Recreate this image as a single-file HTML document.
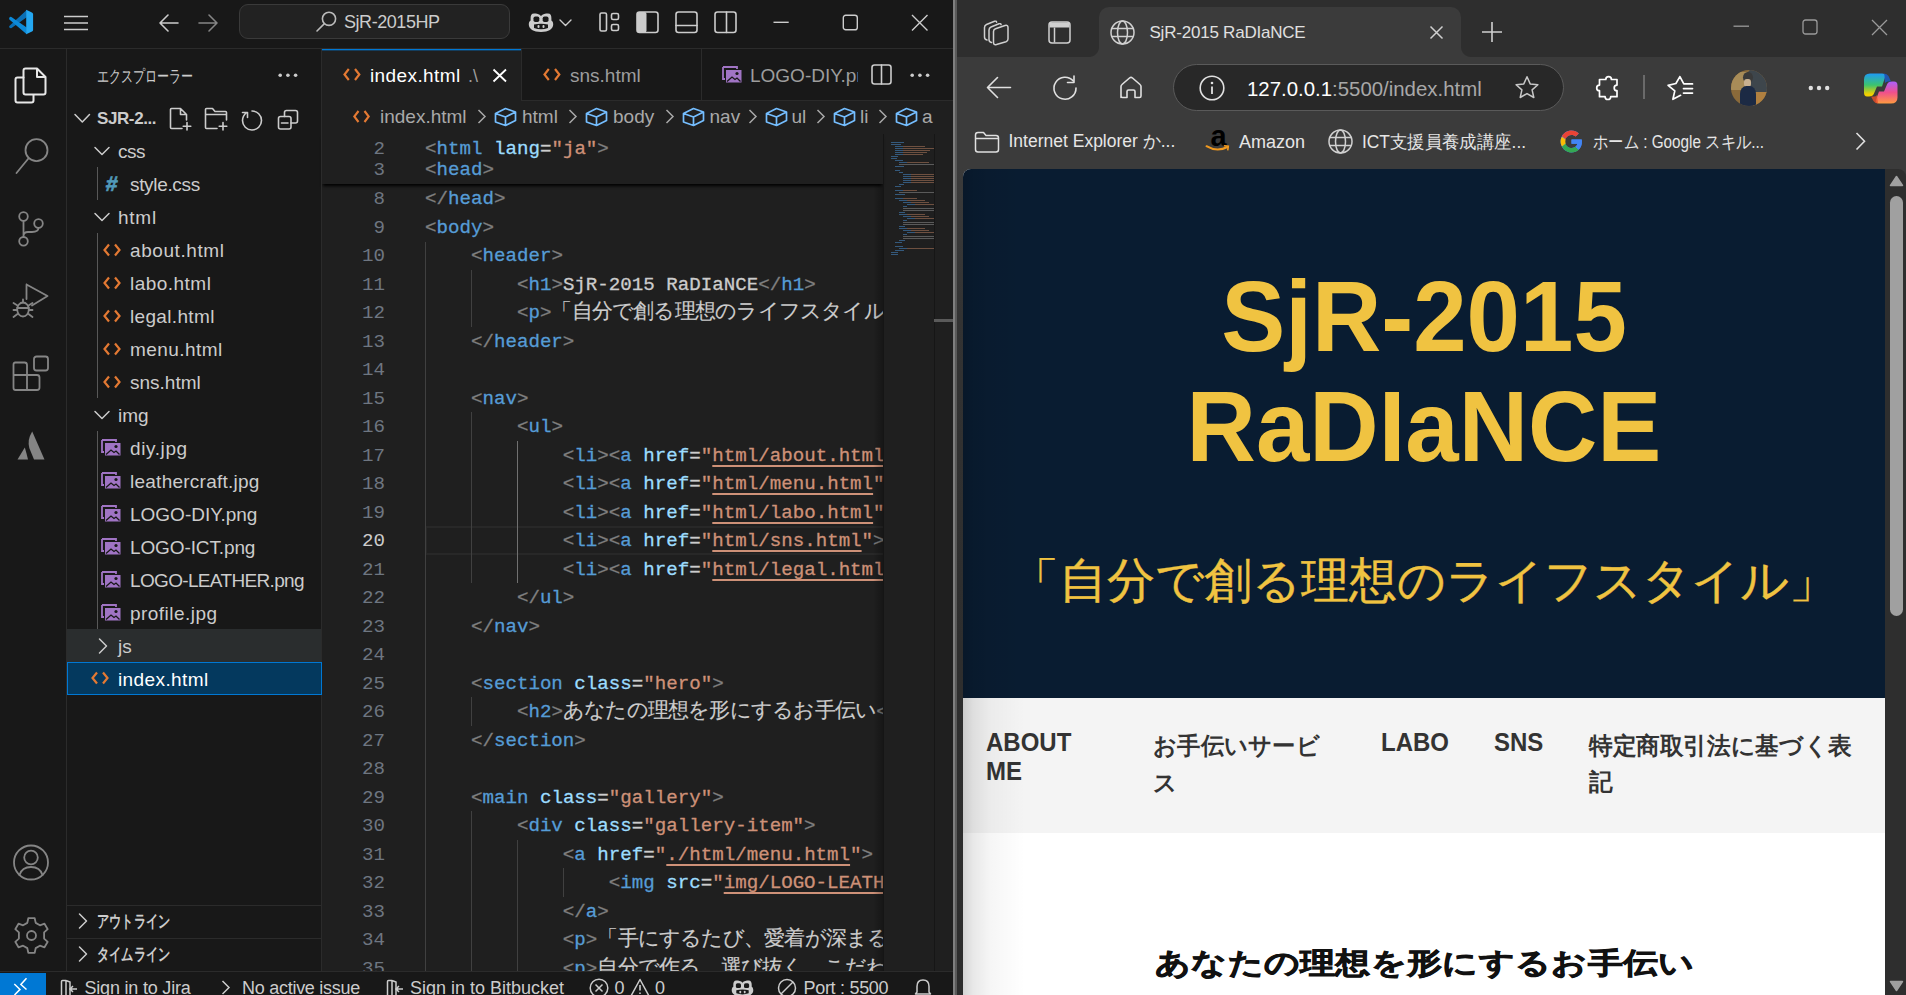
<!DOCTYPE html>
<html><head><meta charset="utf-8">
<style>
*{box-sizing:border-box}
html,body{margin:0;padding:0}
body{width:1906px;height:995px;overflow:hidden;position:relative;background:#181818;font-family:"Liberation Sans",sans-serif;color:#cccccc}
.a{position:absolute}
svg{position:absolute;overflow:visible}
.ic{fill:none;stroke:#cccccc;stroke-width:1.6;stroke-linecap:round;stroke-linejoin:round}
.t{position:absolute;white-space:nowrap;line-height:1}
/* code */
.ln{position:absolute;left:322px;width:63px;text-align:right;font-family:"Liberation Mono",monospace;font-size:19.15px;color:#6e7681;line-height:28.5px;white-space:pre}
.cd{position:absolute;left:425px;font-family:"Liberation Mono",monospace;font-size:19.15px;color:#cccccc;line-height:28.5px;white-space:pre;-webkit-text-stroke:0.3px currentColor}
.b{color:#808080}.g{color:#569cd6}.at{color:#9cdcfe}.s{color:#ce9178}.u{text-decoration:underline;text-decoration-color:#ce9178;text-underline-offset:4px;text-decoration-thickness:2px}
.jp{font-family:"Liberation Sans",sans-serif;font-size:21px;letter-spacing:-0.78px;color:#cccccc;line-height:0;-webkit-text-stroke:0.15px currentColor}
.x{}.tree{position:absolute;font-size:18.5px;color:#cccccc;line-height:33px;white-space:nowrap}
</style></head><body>

<!-- ============ VS CODE ============ -->
<div class="a" id="vscode" style="left:0;top:0;width:953px;height:995px;background:#181818;overflow:hidden">
  <!-- title bar -->
  <div class="a" style="left:0;top:48px;width:953px;height:1px;background:#2b2b2b"></div>
  <!-- vscode logo -->
  <svg style="left:0;top:0" width="40" height="40" viewBox="0 0 40 40">
    <path d="M26.7 10L26.7 17.2L11.6 28Q10.6 28.6 9.6 27.8L9.3 27.4Q8.8 26.5 9.6 25.8Z" fill="#0a6fb5"/>
    <path d="M9.6 17.2Q10.4 16.5 11.4 17.1L26.7 27.4L26.7 34.2L9.6 19.8Q8.8 19 9.2 18.2Z" fill="#0c8ad9"/>
    <path d="M26.2 9.8L31.9 12.4Q33.1 13 33.1 14.4V29.7Q33.1 31 31.9 31.6L26.2 34.2Z" fill="#24a7f1"/>
  </svg>
  <!-- hamburger -->
  <svg style="left:63px;top:15px" width="26" height="16"><path d="M1 1.5H25M1 8H25M1 14.5H25" stroke="#cccccc" stroke-width="1.7" fill="none"/></svg>
  <!-- back / forward -->
  <svg style="left:158px;top:13px" width="22" height="20"><path d="M20 10H2M10 2L2 10L10 18" class="ic" style="stroke-width:1.6"/></svg>
  <svg style="left:197px;top:13px" width="22" height="20"><path d="M2 10H20M12 2L20 10L12 18" class="ic" style="stroke:#858585;stroke-width:1.6"/></svg>
  <!-- command center -->
  <div class="a" style="left:239px;top:4px;width:271px;height:35px;border:1px solid #3a3a3a;border-radius:9px;background:#222222"></div>
  <svg style="left:316px;top:11px" width="21" height="21"><circle cx="13" cy="7.8" r="6.6" class="ic" style="stroke:#bbbbbb"/><path d="M8.4 12.6L1 20" class="ic" style="stroke:#bbbbbb"/></svg>
  <div class="t" style="left:344px;top:12.5px;font-size:18px;letter-spacing:-0.45px;color:#cccccc">SjR-2015HP</div>
  <!-- copilot -->
  <svg style="left:528px;top:11px" width="26" height="22" viewBox="0 0 26 22">
    <path d="M6 2.5C3.5 2.5 2.6 4.5 2.6 7.2V9.5C1.3 10.3 0.8 11.6 0.8 13.5C0.8 18 5.5 21 13 21C20.5 21 25.2 18 25.2 13.5C25.2 11.6 24.7 10.3 23.4 9.5V7.2C23.4 4.5 22.5 2.5 20 2.5C17.5 2.5 14.5 3 13 5C11.5 3 8.5 2.5 6 2.5Z" fill="#cccccc"/>
    <rect x="5.5" y="5.5" width="5.8" height="5.5" rx="1.8" fill="#181818"/><rect x="14.7" y="5.5" width="5.8" height="5.5" rx="1.8" fill="#181818"/>
    <path d="M6 13.5Q13 12 20 13.5V17Q13 19.5 6 17Z" fill="#181818"/>
    <rect x="9.5" y="14" width="2" height="3" rx="1" fill="#cccccc"/><rect x="14.5" y="14" width="2" height="3" rx="1" fill="#cccccc"/>
  </svg>
  <svg style="left:559px;top:19px" width="13" height="8"><path d="M1 1L6.5 6.5L12 1" class="ic" style="stroke-width:1.4"/></svg>
  <!-- layout icons -->
  <svg style="left:599px;top:12px" width="21" height="20"><rect x="1" y="1" width="6.5" height="18" rx="1.5" class="ic"/><rect x="12.5" y="1.5" width="7" height="6" rx="1.5" class="ic"/><rect x="12.5" y="12.5" width="7" height="6" rx="1.5" class="ic"/></svg>
  <svg style="left:636px;top:11px" width="23" height="22"><rect x="1" y="1" width="21" height="20.5" rx="2.5" class="ic"/><rect x="1" y="1" width="9.5" height="20.5" rx="2" fill="#cccccc"/></svg>
  <svg style="left:675px;top:11px" width="23" height="22"><rect x="1" y="1" width="21" height="20.5" rx="2.5" class="ic"/><path d="M1 14.5H22" class="ic"/></svg>
  <svg style="left:714px;top:11px" width="23" height="22"><rect x="1" y="1" width="21" height="20.5" rx="2.5" class="ic"/><path d="M12.5 1V21.5" class="ic"/></svg>
  <!-- window controls -->
  <svg style="left:773px;top:21px" width="17" height="3"><path d="M0.5 1.3H15.7" stroke="#cccccc" stroke-width="1.4"/></svg>
  <svg style="left:842px;top:14px" width="17" height="17"><rect x="1.3" y="1.3" width="14" height="14.5" rx="2.4" fill="none" stroke="#cccccc" stroke-width="1.4"/></svg>
  <svg style="left:911px;top:14px" width="18" height="18"><path d="M1 1L16.5 16.5M16.5 1L1 16.5" stroke="#cccccc" stroke-width="1.4" fill="none"/></svg>

  <!-- activity bar -->
  <div class="a" style="left:66px;top:49px;width:1px;height:922px;background:#2b2b2b"></div>
  <svg style="left:14px;top:67px" width="33" height="37" viewBox="0 0 33 37">
    <path d="M9.5 10.5H3.5Q1.5 10.5 1.5 12.5V33.5Q1.5 35.5 3.5 35.5H17.5Q19.5 35.5 19.5 33.5V28" class="ic" style="stroke:#e7e7e7;stroke-width:2"/>
    <path d="M11.5 1.5H23L31.5 10V25.5Q31.5 27.5 29.5 27.5H11.5Q9.5 27.5 9.5 25.5V3.5Q9.5 1.5 11.5 1.5ZM23 1.5V10H31.5" class="ic" style="stroke:#e7e7e7;stroke-width:2"/>
  </svg>
  <svg style="left:15px;top:138px" width="34" height="37"><circle cx="21.5" cy="12.2" r="11" class="ic" style="stroke:#858585;stroke-width:1.8"/><path d="M13.6 20.3L1.5 35" class="ic" style="stroke:#858585;stroke-width:1.8"/></svg>
  <svg style="left:17px;top:211px" width="28" height="36"><circle cx="6.5" cy="5.5" r="4.3" class="ic" style="stroke:#858585;stroke-width:1.8"/><circle cx="6.5" cy="30.3" r="4.3" class="ic" style="stroke:#858585;stroke-width:1.8"/><circle cx="21.5" cy="12.5" r="4.3" class="ic" style="stroke:#858585;stroke-width:1.8"/><path d="M6.5 9.8V26M21.5 16.8Q21.5 21 15 21H11Q6.5 21 6.5 25" class="ic" style="stroke:#858585;stroke-width:1.8"/></svg>
  <svg style="left:12px;top:283px" width="38" height="37"><path d="M14.5 1.5V16M14.5 1.5L35.5 13L20 22.5" class="ic" style="stroke:#858585;stroke-width:1.8"/><ellipse cx="11" cy="26.5" rx="5.8" ry="7" class="ic" style="stroke:#858585;stroke-width:1.8"/><path d="M5.2 25H16.8M1.5 20L5.5 22.5M20.5 20L16.5 22.5M1.5 27H5M16.8 27H20.5M1.5 34L5.5 31M20.5 34L16.5 31M11 19.5V16.5" class="ic" style="stroke:#858585;stroke-width:1.8"/></svg>
  <svg style="left:12px;top:355px" width="38" height="37"><path d="M3 7.5H12.5Q15 7.5 15 10V20H25Q27.5 20 27.5 22.5V32.5Q27.5 35 25 35H3.5Q1.5 35 1.5 33V9.5Q1.5 7.5 3.5 7.5ZM15 20H1.5M15 20V35" class="ic" style="stroke:#858585;stroke-width:1.8"/><rect x="22" y="1.5" width="14" height="14" rx="2.5" class="ic" style="stroke:#858585;stroke-width:1.8"/></svg>
  <svg style="left:17px;top:431px" width="28" height="29"><path d="M15.2 0.5Q10 9 12.3 17L17 28.5H27.5Z" fill="#858585"/><path d="M7.8 16.5L0.5 28.5H11Q9.5 22 7.8 16.5Z" fill="#858585"/></svg>
  <svg style="left:13px;top:844px" width="37" height="38"><circle cx="18" cy="18.5" r="17" class="ic" style="stroke:#858585;stroke-width:1.8"/><circle cx="18" cy="13.5" r="6.8" class="ic" style="stroke:#858585;stroke-width:1.8"/><path d="M6.5 31Q9 23 18 23Q27 23 29.5 31" class="ic" style="stroke:#858585;stroke-width:1.8"/></svg>
  <svg style="left:13px;top:917px" width="37" height="37" viewBox="-18.5 -18.5 37 37"><path d="M-3.2 -17.3H3.2L4.2 -12.6L8.4 -10.2L13 -11.8L16.2 -6.3L12.6 -3.1V3.1L16.2 6.3L13 11.8L8.4 10.2L4.2 12.6L3.2 17.3H-3.2L-4.2 12.6L-8.4 10.2L-13 11.8L-16.2 6.3L-12.6 3.1V-3.1L-16.2 -6.3L-13 -11.8L-8.4 -10.2L-4.2 -12.6Z" class="ic" style="stroke:#858585;stroke-width:1.8"/><circle r="4.5" class="ic" style="stroke:#858585;stroke-width:1.8"/></svg>

<!--EDITOR-START-->
  <!-- editor -->
  <div class="a" style="left:322px;top:49px;width:631px;height:922px;background:#1f1f1f"></div>
  <!-- tab bar -->
  <div class="a" style="left:322px;top:49px;width:631px;height:51px;background:#181818"></div>
  <div class="a" style="left:322px;top:100px;width:631px;height:1px;background:#2b2b2b"></div>
  <div class="a" style="left:322px;top:49px;width:199px;height:52px;background:#1f1f1f;border-top:1px solid #0078d4"></div><div class="a" style="left:322px;top:50px;width:199px;height:1px;background:rgba(0,120,212,0.35)"></div>
  <div class="a" style="left:521px;top:49px;width:1px;height:51px;background:#2b2b2b"></div>
  <div class="a" style="left:701px;top:49px;width:1px;height:51px;background:#2b2b2b"></div>
  <svg style="left:343px;top:68px" width="18" height="13"><path d="M5.8 1L1.5 6.5L5.8 12M12 1L16.3 6.5L12 12" fill="none" stroke="#e37933" stroke-width="2.2"/></svg>
  <div class="t" style="left:370px;top:66px;font-size:19px;letter-spacing:0.4px;color:#ffffff">index.html</div>
  <div class="t" style="left:468px;top:67px;font-size:18px;color:#9d9d9d">.\</div>
  <svg style="left:492px;top:68px" width="16" height="15"><path d="M1.5 1.5L14 13.5M14 1.5L1.5 13.5" stroke="#ffffff" stroke-width="1.8" fill="none"/></svg>
  <svg style="left:543px;top:68px" width="18" height="13"><path d="M5.8 1L1.5 6.5L5.8 12M12 1L16.3 6.5L12 12" fill="none" stroke="#e37933" stroke-width="2.2"/></svg>
  <div class="t" style="left:570px;top:66px;font-size:19px;color:#9d9d9d">sns.html</div>
  <svg style="left:722px;top:66px" width="20" height="17" viewBox="0 0 20 17"><path d="M1 1H15V3" fill="none" stroke="#a074c4" stroke-width="1.8"/><path d="M1 1V13H3" fill="none" stroke="#a074c4" stroke-width="1.8"/><rect x="4" y="4" width="15.5" height="12.5" fill="#a074c4"/><circle cx="15" cy="7.5" r="1.6" fill="#181818"/><path d="M5 15.5L10 11L13 13.5L15 12L18.5 15.5" fill="none" stroke="#181818" stroke-width="1.3"/></svg>
  <div class="a" style="left:750px;top:60px;width:108px;height:30px;overflow:hidden"><div class="t" style="left:0;top:6px;font-size:19px;color:#9d9d9d">LOGO-DIY.png</div></div>
  <div class="a" style="left:858px;top:49px;width:95px;height:51px;background:#181818"></div>
  <svg style="left:871px;top:64px" width="22" height="21"><rect x="1" y="1" width="19" height="19" rx="2.5" class="ic"/><path d="M10.5 1V20" class="ic"/></svg>
  <svg style="left:910px;top:73px" width="20" height="5"><circle cx="2.2" cy="2.3" r="1.8" fill="#cccccc"/><circle cx="9.9" cy="2.3" r="1.8" fill="#cccccc"/><circle cx="17.6" cy="2.3" r="1.8" fill="#cccccc"/></svg>

  <!-- breadcrumbs -->
  <svg style="left:353px;top:110px" width="17" height="13"><path d="M5.5 1L1.3 6.5L5.5 12M11.5 1L15.7 6.5L11.5 12" fill="none" stroke="#e37933" stroke-width="2.1"/></svg>
  <div class="t" style="left:380px;top:107px;font-size:19px;color:#a9a9a9">index.html</div>
  <svg style="left:477.4px;top:109px" width="10" height="16"><path d="M1.5 1L8 7.5L1.5 14" fill="none" stroke="#a9a9a9" stroke-width="1.5"/></svg>
  <svg style="left:568.4px;top:109px" width="10" height="16"><path d="M1.5 1L8 7.5L1.5 14" fill="none" stroke="#a9a9a9" stroke-width="1.5"/></svg>
  <svg style="left:665.0px;top:109px" width="10" height="16"><path d="M1.5 1L8 7.5L1.5 14" fill="none" stroke="#a9a9a9" stroke-width="1.5"/></svg>
  <svg style="left:747.8px;top:109px" width="10" height="16"><path d="M1.5 1L8 7.5L1.5 14" fill="none" stroke="#a9a9a9" stroke-width="1.5"/></svg>
  <svg style="left:816.0px;top:109px" width="10" height="16"><path d="M1.5 1L8 7.5L1.5 14" fill="none" stroke="#a9a9a9" stroke-width="1.5"/></svg>
  <svg style="left:878.0px;top:109px" width="10" height="16"><path d="M1.5 1L8 7.5L1.5 14" fill="none" stroke="#a9a9a9" stroke-width="1.5"/></svg>
  <svg style="left:494.0px;top:107px" width="23" height="20" viewBox="0 0 23 20"><path d="M1.5 6.5L11.5 1.5L21.5 5V13.5L11.5 18.5L1.5 15Z M1.5 6.5L11.5 10L21.5 5 M11.5 10V18.5" fill="none" stroke="#75beff" stroke-width="1.7" stroke-linejoin="round"/></svg>
  <svg style="left:585.0px;top:107px" width="23" height="20" viewBox="0 0 23 20"><path d="M1.5 6.5L11.5 1.5L21.5 5V13.5L11.5 18.5L1.5 15Z M1.5 6.5L11.5 10L21.5 5 M11.5 10V18.5" fill="none" stroke="#75beff" stroke-width="1.7" stroke-linejoin="round"/></svg>
  <svg style="left:681.7px;top:107px" width="23" height="20" viewBox="0 0 23 20"><path d="M1.5 6.5L11.5 1.5L21.5 5V13.5L11.5 18.5L1.5 15Z M1.5 6.5L11.5 10L21.5 5 M11.5 10V18.5" fill="none" stroke="#75beff" stroke-width="1.7" stroke-linejoin="round"/></svg>
  <svg style="left:764.6px;top:107px" width="23" height="20" viewBox="0 0 23 20"><path d="M1.5 6.5L11.5 1.5L21.5 5V13.5L11.5 18.5L1.5 15Z M1.5 6.5L11.5 10L21.5 5 M11.5 10V18.5" fill="none" stroke="#75beff" stroke-width="1.7" stroke-linejoin="round"/></svg>
  <svg style="left:832.8px;top:107px" width="23" height="20" viewBox="0 0 23 20"><path d="M1.5 6.5L11.5 1.5L21.5 5V13.5L11.5 18.5L1.5 15Z M1.5 6.5L11.5 10L21.5 5 M11.5 10V18.5" fill="none" stroke="#75beff" stroke-width="1.7" stroke-linejoin="round"/></svg>
  <svg style="left:894.7px;top:107px" width="23" height="20" viewBox="0 0 23 20"><path d="M1.5 6.5L11.5 1.5L21.5 5V13.5L11.5 18.5L1.5 15Z M1.5 6.5L11.5 10L21.5 5 M11.5 10V18.5" fill="none" stroke="#75beff" stroke-width="1.7" stroke-linejoin="round"/></svg>
  <div class="t" style="left:522.0px;top:107px;font-size:19px;color:#a9a9a9">html</div>
  <div class="t" style="left:613.0px;top:107px;font-size:19px;color:#a9a9a9">body</div>
  <div class="t" style="left:709.5px;top:107px;font-size:19px;color:#a9a9a9">nav</div>
  <div class="t" style="left:791.4px;top:107px;font-size:19px;color:#a9a9a9">ul</div>
  <div class="t" style="left:860.0px;top:107px;font-size:19px;color:#a9a9a9">li</div>
  <div class="t" style="left:922.1px;top:107px;font-size:19px;color:#a9a9a9">a</div>

  <!-- line highlight (line 20) -->
  <div class="a" style="left:425px;top:526px;width:458px;height:28.5px;border:2px solid #282828;border-right:none"></div>
  <!-- indent guides -->
  <div class="a" style="left:425px;top:242px;width:1px;height:729px;background:#404040"></div>
  <div class="a" style="left:471px;top:270px;width:1px;height:57px;background:#404040"></div>
  <div class="a" style="left:471px;top:412px;width:1px;height:171px;background:#404040"></div>
  <div class="a" style="left:517px;top:441px;width:1px;height:142px;background:#707070"></div>
  <div class="a" style="left:471px;top:697px;width:1px;height:28.5px;background:#404040"></div>
  <div class="a" style="left:471px;top:811px;width:1px;height:160px;background:#404040"></div>
  <div class="a" style="left:517px;top:840px;width:1px;height:131px;background:#404040"></div>
  <div class="a" style="left:563px;top:868px;width:1px;height:28.5px;background:#404040"></div>
  <!-- git marker line 25 -->
  

  <div class="a" style="left:322px;top:134px;width:561px;height:837px;overflow:hidden">
<div class="ln" style="left:0;top:51.0px">8</div>
<div class="cd" style="left:103px;top:51.0px"><span class="b">&lt;/</span><span class="g">head</span><span class="b">&gt;</span></div>
<div class="ln" style="left:0;top:79.5px">9</div>
<div class="cd" style="left:103px;top:79.5px"><span class="b">&lt;</span><span class="g">body</span><span class="b">&gt;</span></div>
<div class="ln" style="left:0;top:108.0px">10</div>
<div class="cd" style="left:103px;top:108.0px">    <span class="b">&lt;</span><span class="g">header</span><span class="b">&gt;</span></div>
<div class="ln" style="left:0;top:136.5px">11</div>
<div class="cd" style="left:103px;top:136.5px">        <span class="b">&lt;</span><span class="g">h1</span><span class="b">&gt;</span><span class="tx">SjR-2015 RaDIaNCE</span><span class="b">&lt;/</span><span class="g">h1</span><span class="b">&gt;</span></div>
<div class="ln" style="left:0;top:165.0px">12</div>
<div class="cd" style="left:103px;top:165.0px">        <span class="b">&lt;</span><span class="g">p</span><span class="b">&gt;</span><span class="jp">「自分で創る理想のライフスタイル」</span><span class="b">&lt;/</span><span class="g">p</span><span class="b">&gt;</span></div>
<div class="ln" style="left:0;top:193.5px">13</div>
<div class="cd" style="left:103px;top:193.5px">    <span class="b">&lt;/</span><span class="g">header</span><span class="b">&gt;</span></div>
<div class="ln" style="left:0;top:222.0px">14</div>
<div class="ln" style="left:0;top:250.5px">15</div>
<div class="cd" style="left:103px;top:250.5px">    <span class="b">&lt;</span><span class="g">nav</span><span class="b">&gt;</span></div>
<div class="ln" style="left:0;top:279.0px">16</div>
<div class="cd" style="left:103px;top:279.0px">        <span class="b">&lt;</span><span class="g">ul</span><span class="b">&gt;</span></div>
<div class="ln" style="left:0;top:307.5px">17</div>
<div class="cd" style="left:103px;top:307.5px">            <span class="b">&lt;</span><span class="g">li</span><span class="b">&gt;</span><span class="b">&lt;</span><span class="g">a</span> <span class="at">href</span>=<span class="s">"<span class="u">html/about.html</span>"</span><span class="b">&gt;</span><span class="tx">ABOUT ME</span><span class="b">&lt;/</span><span class="g">a</span><span class="b">&gt;</span><span class="b">&lt;/</span><span class="g">li</span><span class="b">&gt;</span></div>
<div class="ln" style="left:0;top:336.0px">18</div>
<div class="cd" style="left:103px;top:336.0px">            <span class="b">&lt;</span><span class="g">li</span><span class="b">&gt;</span><span class="b">&lt;</span><span class="g">a</span> <span class="at">href</span>=<span class="s">"<span class="u">html/menu.html</span>"</span><span class="b">&gt;</span><span class="jp">お手伝いサービス</span><span class="b">&lt;/</span><span class="g">a</span><span class="b">&gt;</span></div>
<div class="ln" style="left:0;top:364.5px">19</div>
<div class="cd" style="left:103px;top:364.5px">            <span class="b">&lt;</span><span class="g">li</span><span class="b">&gt;</span><span class="b">&lt;</span><span class="g">a</span> <span class="at">href</span>=<span class="s">"<span class="u">html/labo.html</span>"</span><span class="b">&gt;</span><span class="tx">LABO</span><span class="b">&lt;/</span><span class="g">a</span><span class="b">&gt;</span></div>
<div class="ln" style="left:0;top:393.0px;color:#cccccc">20</div>
<div class="cd" style="left:103px;top:393.0px">            <span class="b">&lt;</span><span class="g">li</span><span class="b">&gt;</span><span class="b">&lt;</span><span class="g">a</span> <span class="at">href</span>=<span class="s">"<span class="u">html/sns.html</span>"</span><span class="b">&gt;</span><span class="tx">SNS</span><span class="b">&lt;/</span><span class="g">a</span><span class="b">&gt;</span></div>
<div class="ln" style="left:0;top:421.5px">21</div>
<div class="cd" style="left:103px;top:421.5px">            <span class="b">&lt;</span><span class="g">li</span><span class="b">&gt;</span><span class="b">&lt;</span><span class="g">a</span> <span class="at">href</span>=<span class="s">"<span class="u">html/legal.html</span>"</span><span class="b">&gt;</span><span class="jp">特定商取引法</span><span class="b">&lt;/</span><span class="g">a</span><span class="b">&gt;</span></div>
<div class="ln" style="left:0;top:450.0px">22</div>
<div class="cd" style="left:103px;top:450.0px">        <span class="b">&lt;/</span><span class="g">ul</span><span class="b">&gt;</span></div>
<div class="ln" style="left:0;top:478.5px">23</div>
<div class="cd" style="left:103px;top:478.5px">    <span class="b">&lt;/</span><span class="g">nav</span><span class="b">&gt;</span></div>
<div class="ln" style="left:0;top:507.0px">24</div>
<div class="ln" style="left:0;top:535.5px">25</div>
<div class="cd" style="left:103px;top:535.5px">    <span class="b">&lt;</span><span class="g">section</span> <span class="at">class</span>=<span class="s">"hero"</span><span class="b">&gt;</span></div>
<div class="ln" style="left:0;top:564.0px">26</div>
<div class="cd" style="left:103px;top:564.0px">        <span class="b">&lt;</span><span class="g">h2</span><span class="b">&gt;</span><span class="jp">あなたの理想を形にするお手伝い</span><span class="b">&lt;/</span><span class="g">h2</span><span class="b">&gt;</span></div>
<div class="ln" style="left:0;top:592.5px">27</div>
<div class="cd" style="left:103px;top:592.5px">    <span class="b">&lt;/</span><span class="g">section</span><span class="b">&gt;</span></div>
<div class="ln" style="left:0;top:621.0px">28</div>
<div class="ln" style="left:0;top:649.5px">29</div>
<div class="cd" style="left:103px;top:649.5px">    <span class="b">&lt;</span><span class="g">main</span> <span class="at">class</span>=<span class="s">"gallery"</span><span class="b">&gt;</span></div>
<div class="ln" style="left:0;top:678.0px">30</div>
<div class="cd" style="left:103px;top:678.0px">        <span class="b">&lt;</span><span class="g">div</span> <span class="at">class</span>=<span class="s">"gallery-item"</span><span class="b">&gt;</span></div>
<div class="ln" style="left:0;top:706.5px">31</div>
<div class="cd" style="left:103px;top:706.5px">            <span class="b">&lt;</span><span class="g">a</span> <span class="at">href</span>=<span class="s">"<span class="u">./html/menu.html</span>"</span><span class="b">&gt;</span></div>
<div class="ln" style="left:0;top:735.0px">32</div>
<div class="cd" style="left:103px;top:735.0px">                <span class="b">&lt;</span><span class="g">img</span> <span class="at">src</span>=<span class="s">"<span class="u">img/LOGO-LEATHER.png</span>"</span> <span class="at">alt</span></div>
<div class="ln" style="left:0;top:763.5px">33</div>
<div class="cd" style="left:103px;top:763.5px">            <span class="b">&lt;/</span><span class="g">a</span><span class="b">&gt;</span></div>
<div class="ln" style="left:0;top:792.0px">34</div>
<div class="cd" style="left:103px;top:792.0px">            <span class="b">&lt;</span><span class="g">p</span><span class="b">&gt;</span><span class="jp">「手にするたび、愛着が深まる」</span><span class="b">&lt;/</span><span class="g">p</span><span class="b">&gt;</span></div>
<div class="ln" style="left:0;top:820.5px">35</div>
<div class="cd" style="left:103px;top:820.5px">            <span class="b">&lt;</span><span class="g">p</span><span class="b">&gt;</span><span class="jp">自分で作る、選び抜く、こだわる</span><span class="b">&lt;/</span><span class="g">p</span><span class="b">&gt;</span></div>
</div>

  <!-- sticky scroll -->
  <div class="a" style="left:322px;top:134px;width:561px;height:50px;background:#1f1f1f;box-shadow:0 3px 3px -1px #000000"></div>
  <div class="ln" style="top:135px">2</div>
  <div class="cd" style="top:135px"><span class="b">&lt;</span><span class="g">html</span> <span class="at">lang</span>=<span class="s">"ja"</span><span class="b">&gt;</span></div>
  <div class="ln" style="top:156px">3</div>
  <div class="cd" style="top:156px"><span class="b">&lt;</span><span class="g">head</span><span class="b">&gt;</span></div>

  <!-- minimap -->
  <div class="a" style="left:873px;top:184px;width:10px;height:787px;background:linear-gradient(90deg,rgba(0,0,0,0),rgba(0,0,0,0.28))"></div>
  <div class="a" style="left:882.5px;top:134px;width:1px;height:837px;background:#151515"></div>
  <div class="a" style="left:934px;top:134px;width:1px;height:837px;background:#161616"></div>
  <div class="a" style="left:891.0px;top:142.0px;width:13.0px;height:1.4px;background:#34597c"></div>
  <div class="a" style="left:891.0px;top:144.0px;width:10.0px;height:1.4px;background:#34597c"></div>
  <div class="a" style="left:895.0px;top:146.0px;width:8.0px;height:1.4px;background:#34597c"></div>
  <div class="a" style="left:903.0px;top:146.0px;width:22.0px;height:1.4px;background:#6e5040"></div>
  <div class="a" style="left:895.0px;top:148.0px;width:8.0px;height:1.4px;background:#34597c"></div>
  <div class="a" style="left:903.0px;top:148.0px;width:31.0px;height:1.4px;background:#6e5040"></div>
  <div class="a" style="left:895.0px;top:150.0px;width:8.0px;height:1.4px;background:#34597c"></div>
  <div class="a" style="left:903.0px;top:150.0px;width:27.0px;height:1.4px;background:#6e5040"></div>
  <div class="a" style="left:895.0px;top:152.0px;width:8.0px;height:1.4px;background:#34597c"></div>
  <div class="a" style="left:903.0px;top:152.0px;width:24.0px;height:1.4px;background:#6e5040"></div>
  <div class="a" style="left:895.0px;top:154.0px;width:8.0px;height:1.4px;background:#34597c"></div>
  <div class="a" style="left:903.0px;top:154.0px;width:20.0px;height:1.4px;background:#6e5040"></div>
  <div class="a" style="left:891.0px;top:156.0px;width:7.0px;height:1.4px;background:#34597c"></div>
  <div class="a" style="left:891.0px;top:158.0px;width:6.0px;height:1.4px;background:#34597c"></div>
  <div class="a" style="left:895.0px;top:160.0px;width:8.0px;height:1.4px;background:#34597c"></div>
  <div class="a" style="left:899.0px;top:162.0px;width:8.0px;height:1.4px;background:#34597c"></div>
  <div class="a" style="left:907.0px;top:162.0px;width:22.0px;height:1.4px;background:#6e5040"></div>
  <div class="a" style="left:899.0px;top:164.0px;width:35.0px;height:1.4px;background:#5a5a5a"></div>
  <div class="a" style="left:895.0px;top:166.0px;width:9.0px;height:1.4px;background:#34597c"></div>
  <div class="a" style="left:895.0px;top:170.0px;width:5.0px;height:1.4px;background:#34597c"></div>
  <div class="a" style="left:899.0px;top:172.0px;width:4.0px;height:1.4px;background:#34597c"></div>
  <div class="a" style="left:903.0px;top:174.0px;width:8.0px;height:1.4px;background:#34597c"></div>
  <div class="a" style="left:911.0px;top:174.0px;width:23.0px;height:1.4px;background:#6e5040"></div>
  <div class="a" style="left:903.0px;top:176.0px;width:8.0px;height:1.4px;background:#34597c"></div>
  <div class="a" style="left:911.0px;top:176.0px;width:23.0px;height:1.4px;background:#6e5040"></div>
  <div class="a" style="left:903.0px;top:178.0px;width:8.0px;height:1.4px;background:#34597c"></div>
  <div class="a" style="left:911.0px;top:178.0px;width:23.0px;height:1.4px;background:#6e5040"></div>
  <div class="a" style="left:903.0px;top:180.0px;width:8.0px;height:1.4px;background:#34597c"></div>
  <div class="a" style="left:911.0px;top:180.0px;width:23.0px;height:1.4px;background:#6e5040"></div>
  <div class="a" style="left:903.0px;top:182.0px;width:8.0px;height:1.4px;background:#34597c"></div>
  <div class="a" style="left:911.0px;top:182.0px;width:23.0px;height:1.4px;background:#6e5040"></div>
  <div class="a" style="left:899.0px;top:184.0px;width:5.0px;height:1.4px;background:#34597c"></div>
  <div class="a" style="left:895.0px;top:186.0px;width:6.0px;height:1.4px;background:#34597c"></div>
  <div class="a" style="left:895.0px;top:190.0px;width:8.0px;height:1.4px;background:#34597c"></div>
  <div class="a" style="left:903.0px;top:190.0px;width:14.0px;height:1.4px;background:#6e5040"></div>
  <div class="a" style="left:899.0px;top:192.0px;width:35.0px;height:1.4px;background:#5a5a5a"></div>
  <div class="a" style="left:895.0px;top:194.0px;width:10.0px;height:1.4px;background:#34597c"></div>
  <div class="a" style="left:895.0px;top:198.0px;width:8.0px;height:1.4px;background:#34597c"></div>
  <div class="a" style="left:903.0px;top:198.0px;width:14.0px;height:1.4px;background:#6e5040"></div>
  <div class="a" style="left:899.0px;top:200.0px;width:8.0px;height:1.4px;background:#34597c"></div>
  <div class="a" style="left:907.0px;top:200.0px;width:18.0px;height:1.4px;background:#6e5040"></div>
  <div class="a" style="left:903.0px;top:202.0px;width:8.0px;height:1.4px;background:#34597c"></div>
  <div class="a" style="left:911.0px;top:202.0px;width:18.0px;height:1.4px;background:#6e5040"></div>
  <div class="a" style="left:907.0px;top:204.0px;width:8.0px;height:1.4px;background:#34597c"></div>
  <div class="a" style="left:915.0px;top:204.0px;width:19.0px;height:1.4px;background:#6e5040"></div>
  <div class="a" style="left:903.0px;top:206.0px;width:4.0px;height:1.4px;background:#34597c"></div>
  <div class="a" style="left:903.0px;top:208.0px;width:31.0px;height:1.4px;background:#5a5a5a"></div>
  <div class="a" style="left:903.0px;top:210.0px;width:31.0px;height:1.4px;background:#5a5a5a"></div>
  <div class="a" style="left:899.0px;top:212.0px;width:6.0px;height:1.4px;background:#34597c"></div>
  <div class="a" style="left:899.0px;top:214.0px;width:8.0px;height:1.4px;background:#34597c"></div>
  <div class="a" style="left:907.0px;top:214.0px;width:18.0px;height:1.4px;background:#6e5040"></div>
  <div class="a" style="left:903.0px;top:216.0px;width:8.0px;height:1.4px;background:#34597c"></div>
  <div class="a" style="left:911.0px;top:216.0px;width:18.0px;height:1.4px;background:#6e5040"></div>
  <div class="a" style="left:907.0px;top:218.0px;width:8.0px;height:1.4px;background:#34597c"></div>
  <div class="a" style="left:915.0px;top:218.0px;width:19.0px;height:1.4px;background:#6e5040"></div>
  <div class="a" style="left:903.0px;top:220.0px;width:4.0px;height:1.4px;background:#34597c"></div>
  <div class="a" style="left:903.0px;top:222.0px;width:31.0px;height:1.4px;background:#5a5a5a"></div>
  <div class="a" style="left:903.0px;top:224.0px;width:31.0px;height:1.4px;background:#5a5a5a"></div>
  <div class="a" style="left:899.0px;top:226.0px;width:6.0px;height:1.4px;background:#34597c"></div>
  <div class="a" style="left:899.0px;top:228.0px;width:8.0px;height:1.4px;background:#34597c"></div>
  <div class="a" style="left:907.0px;top:228.0px;width:18.0px;height:1.4px;background:#6e5040"></div>
  <div class="a" style="left:903.0px;top:230.0px;width:8.0px;height:1.4px;background:#34597c"></div>
  <div class="a" style="left:911.0px;top:230.0px;width:18.0px;height:1.4px;background:#6e5040"></div>
  <div class="a" style="left:907.0px;top:232.0px;width:8.0px;height:1.4px;background:#34597c"></div>
  <div class="a" style="left:915.0px;top:232.0px;width:19.0px;height:1.4px;background:#6e5040"></div>
  <div class="a" style="left:903.0px;top:234.0px;width:4.0px;height:1.4px;background:#34597c"></div>
  <div class="a" style="left:903.0px;top:236.0px;width:31.0px;height:1.4px;background:#5a5a5a"></div>
  <div class="a" style="left:903.0px;top:238.0px;width:31.0px;height:1.4px;background:#5a5a5a"></div>
  <div class="a" style="left:899.0px;top:240.0px;width:6.0px;height:1.4px;background:#34597c"></div>
  <div class="a" style="left:895.0px;top:242.0px;width:7.0px;height:1.4px;background:#34597c"></div>
  <div class="a" style="left:895.0px;top:246.0px;width:8.0px;height:1.4px;background:#34597c"></div>
  <div class="a" style="left:899.0px;top:248.0px;width:8.0px;height:1.4px;background:#34597c"></div>
  <div class="a" style="left:907.0px;top:248.0px;width:27.0px;height:1.4px;background:#6e5040"></div>
  <div class="a" style="left:895.0px;top:250.0px;width:9.0px;height:1.4px;background:#34597c"></div>
  <div class="a" style="left:891.0px;top:252.0px;width:7.0px;height:1.4px;background:#34597c"></div>
  <div class="a" style="left:891.0px;top:254.0px;width:7.0px;height:1.4px;background:#34597c"></div>
  <div class="a" style="left:934px;top:319px;width:19px;height:3px;background:#5a5a5a"></div>

<!--EDITOR-END-->
  <!-- sidebar -->
  <div class="a" style="left:321px;top:49px;width:1px;height:922px;background:#2b2b2b"></div>
  <div class="t" style="left:97px;top:68px;font-size:17px;color:#cccccc;transform:scaleX(0.71);transform-origin:0 0">エクスプローラー</div>
  <svg style="left:278px;top:73px" width="20" height="5"><circle cx="2.2" cy="2.3" r="1.8" fill="#cccccc"/><circle cx="9.9" cy="2.3" r="1.8" fill="#cccccc"/><circle cx="17.6" cy="2.3" r="1.8" fill="#cccccc"/></svg>
  <!-- root row -->
  <svg style="left:74px;top:113px" width="17" height="11"><path d="M1 1.5L8.3 9L15.5 1.5" class="ic" style="stroke-width:1.5"/></svg>
  <div class="t" style="left:97px;top:109.5px;font-size:17px;font-weight:bold;color:#cccccc;letter-spacing:-0.4px">SJR-2...</div>
  <svg style="left:169px;top:107px" width="24" height="24"><path d="M13 21.5H2.5Q1.5 21.5 1.5 20.5V2.5Q1.5 1.5 2.5 1.5H11.5L17.5 7.5V13M11.5 1.5V7.5H17.5M18 15.5V23M14.2 19.3H21.8" class="ic"/></svg>
  <svg style="left:204px;top:107px" width="26" height="24"><path d="M13 21.5H2.5Q1.5 21.5 1.5 20.5V2.5Q1.5 1.5 2.5 1.5H8.5L11 4.5H21.5Q22.5 4.5 22.5 5.5V13M1.5 7.5H22.5M19 15.5V23M15.2 19.3H22.8" class="ic"/></svg>
  <svg style="left:241px;top:107px" width="22" height="24"><path d="M5.5 5.5Q1.5 9 1.5 13.5A9.5 9.5 0 0 0 20.5 13.5A9.5 9.5 0 0 0 11 4M1.5 5.5H6.5V10.5" class="ic"/></svg>
  <svg style="left:277px;top:109px" width="22" height="22"><rect x="1.5" y="7.5" width="12.5" height="12.5" rx="2" class="ic"/><path d="M7.5 7.5V3.5Q7.5 1.5 9.5 1.5H18.5Q20.5 1.5 20.5 3.5V12Q20.5 14 18.5 14H14M4.5 14H11" class="ic"/></svg>

  <!-- tree -->
  <div class="a" style="left:97px;top:167px;width:1px;height:33px;background:#585858"></div>
  <div class="a" style="left:97px;top:233px;width:1px;height:165px;background:#585858"></div>
  <div class="a" style="left:97px;top:431px;width:1px;height:198px;background:#585858"></div>
  <div class="a" style="left:67px;top:629px;width:254px;height:33px;background:#2a2d2e"></div>
  <div class="a" style="left:67px;top:662px;width:255px;height:33px;background:#04395e;border:1px solid #0078d4"></div>

  <svg style="left:94px;top:146px" width="17" height="11"><path d="M1 1.5L8 8.5L15 1.5" class="ic" style="stroke-width:1.5"/></svg>
  <div class="t" style="left:118px;top:142px;font-size:19px;letter-spacing:-0.5px">css</div>
  <div class="t" style="left:105.5px;top:172.5px;font-size:21px;font-weight:bold;color:#519aba;-webkit-text-stroke:0.7px #519aba;transform:skewX(-6deg)">#</div>
  <div class="t" style="left:130px;top:175px;font-size:19px;letter-spacing:-0.33px">style.css</div>
  <svg style="left:94px;top:212px" width="17" height="11"><path d="M1 1.5L8 8.5L15 1.5" class="ic" style="stroke-width:1.5"/></svg>
  <div class="t" style="left:118px;top:208px;font-size:19px;letter-spacing:0.75px">html</div>
  <svg style="left:103px;top:243px" width="18" height="14"><path d="M6 1.5L1.5 7L6 12.5M12 1.5L16.5 7L12 12.5" fill="none" stroke="#e37933" stroke-width="2.2"/></svg>
  <div class="t" style="left:130px;top:241px;font-size:19px;letter-spacing:0.57px">about.html</div>
  <svg style="left:103px;top:276px" width="18" height="14"><path d="M6 1.5L1.5 7L6 12.5M12 1.5L16.5 7L12 12.5" fill="none" stroke="#e37933" stroke-width="2.2"/></svg>
  <div class="t" style="left:130px;top:274px;font-size:19px;letter-spacing:0.47px">labo.html</div>
  <svg style="left:103px;top:309px" width="18" height="14"><path d="M6 1.5L1.5 7L6 12.5M12 1.5L16.5 7L12 12.5" fill="none" stroke="#e37933" stroke-width="2.2"/></svg>
  <div class="t" style="left:130px;top:307px;font-size:19px;letter-spacing:0.34px">legal.html</div>
  <svg style="left:103px;top:342px" width="18" height="14"><path d="M6 1.5L1.5 7L6 12.5M12 1.5L16.5 7L12 12.5" fill="none" stroke="#e37933" stroke-width="2.2"/></svg>
  <div class="t" style="left:130px;top:340px;font-size:19px;letter-spacing:0.43px">menu.html</div>
  <svg style="left:103px;top:375px" width="18" height="14"><path d="M6 1.5L1.5 7L6 12.5M12 1.5L16.5 7L12 12.5" fill="none" stroke="#e37933" stroke-width="2.2"/></svg>
  <div class="t" style="left:130px;top:373px;font-size:19px">sns.html</div>
  <svg style="left:94px;top:410px" width="17" height="11"><path d="M1 1.5L8 8.5L15 1.5" class="ic" style="stroke-width:1.5"/></svg>
  <div class="t" style="left:118px;top:406px;font-size:19px">img</div>
  <svg style="left:101px;top:439px" width="20" height="17" viewBox="0 0 20 17"><path d="M1 1H15V3" fill="none" stroke="#a074c4" stroke-width="1.8"/><path d="M1 1V13H3" fill="none" stroke="#a074c4" stroke-width="1.8"/><rect x="4" y="4" width="15.5" height="12.5" fill="#a074c4"/><circle cx="15" cy="7.5" r="1.6" fill="#181818"/><path d="M4.5 16L10 10.5L13.5 13.5L15.5 12L19.5 15.5V16.5H4.5Z" fill="#181818" opacity="0.0"/><path d="M5 15.5L10 11L13 13.5L15 12L18.5 15.5" fill="none" stroke="#181818" stroke-width="1.3"/></svg>
  <div class="t" style="left:130px;top:439px;font-size:19px;letter-spacing:0.61px">diy.jpg</div>
  <svg style="left:101px;top:472px" width="20" height="17" viewBox="0 0 20 17"><path d="M1 1H15V3" fill="none" stroke="#a074c4" stroke-width="1.8"/><path d="M1 1V13H3" fill="none" stroke="#a074c4" stroke-width="1.8"/><rect x="4" y="4" width="15.5" height="12.5" fill="#a074c4"/><circle cx="15" cy="7.5" r="1.6" fill="#181818"/><path d="M4.5 16L10 10.5L13.5 13.5L15.5 12L19.5 15.5V16.5H4.5Z" fill="#181818" opacity="0.0"/><path d="M5 15.5L10 11L13 13.5L15 12L18.5 15.5" fill="none" stroke="#181818" stroke-width="1.3"/></svg>
  <div class="t" style="left:130px;top:472px;font-size:19px;letter-spacing:0.25px">leathercraft.jpg</div>
  <svg style="left:101px;top:505px" width="20" height="17" viewBox="0 0 20 17"><path d="M1 1H15V3" fill="none" stroke="#a074c4" stroke-width="1.8"/><path d="M1 1V13H3" fill="none" stroke="#a074c4" stroke-width="1.8"/><rect x="4" y="4" width="15.5" height="12.5" fill="#a074c4"/><circle cx="15" cy="7.5" r="1.6" fill="#181818"/><path d="M4.5 16L10 10.5L13.5 13.5L15.5 12L19.5 15.5V16.5H4.5Z" fill="#181818" opacity="0.0"/><path d="M5 15.5L10 11L13 13.5L15 12L18.5 15.5" fill="none" stroke="#181818" stroke-width="1.3"/></svg>
  <div class="t" style="left:130px;top:505px;font-size:19px">LOGO-DIY.png</div>
  <svg style="left:101px;top:538px" width="20" height="17" viewBox="0 0 20 17"><path d="M1 1H15V3" fill="none" stroke="#a074c4" stroke-width="1.8"/><path d="M1 1V13H3" fill="none" stroke="#a074c4" stroke-width="1.8"/><rect x="4" y="4" width="15.5" height="12.5" fill="#a074c4"/><circle cx="15" cy="7.5" r="1.6" fill="#181818"/><path d="M4.5 16L10 10.5L13.5 13.5L15.5 12L19.5 15.5V16.5H4.5Z" fill="#181818" opacity="0.0"/><path d="M5 15.5L10 11L13 13.5L15 12L18.5 15.5" fill="none" stroke="#181818" stroke-width="1.3"/></svg>
  <div class="t" style="left:130px;top:538px;font-size:19px;letter-spacing:-0.12px">LOGO-ICT.png</div>
  <svg style="left:101px;top:571px" width="20" height="17" viewBox="0 0 20 17"><path d="M1 1H15V3" fill="none" stroke="#a074c4" stroke-width="1.8"/><path d="M1 1V13H3" fill="none" stroke="#a074c4" stroke-width="1.8"/><rect x="4" y="4" width="15.5" height="12.5" fill="#a074c4"/><circle cx="15" cy="7.5" r="1.6" fill="#181818"/><path d="M4.5 16L10 10.5L13.5 13.5L15.5 12L19.5 15.5V16.5H4.5Z" fill="#181818" opacity="0.0"/><path d="M5 15.5L10 11L13 13.5L15 12L18.5 15.5" fill="none" stroke="#181818" stroke-width="1.3"/></svg>
  <div class="t" style="left:130px;top:571px;font-size:19px;letter-spacing:-0.66px">LOGO-LEATHER.png</div>
  <svg style="left:101px;top:604px" width="20" height="17" viewBox="0 0 20 17"><path d="M1 1H15V3" fill="none" stroke="#a074c4" stroke-width="1.8"/><path d="M1 1V13H3" fill="none" stroke="#a074c4" stroke-width="1.8"/><rect x="4" y="4" width="15.5" height="12.5" fill="#a074c4"/><circle cx="15" cy="7.5" r="1.6" fill="#181818"/><path d="M4.5 16L10 10.5L13.5 13.5L15.5 12L19.5 15.5V16.5H4.5Z" fill="#181818" opacity="0.0"/><path d="M5 15.5L10 11L13 13.5L15 12L18.5 15.5" fill="none" stroke="#181818" stroke-width="1.3"/></svg>
  <div class="t" style="left:130px;top:604px;font-size:19px;letter-spacing:0.47px">profile.jpg</div>
  <svg style="left:98px;top:638px" width="10" height="17"><path d="M1.5 1L8.5 8L1.5 15" class="ic" style="stroke-width:1.5"/></svg>
  <div class="t" style="left:118px;top:637px;font-size:19px">js</div>
  <svg style="left:91px;top:671px" width="18" height="14"><path d="M6 1.5L1.5 7L6 12.5M12 1.5L16.5 7L12 12.5" fill="none" stroke="#e37933" stroke-width="2.2"/></svg>
  <div class="t" style="left:118px;top:670px;font-size:19px;color:#ffffff;letter-spacing:0.4px">index.html</div>

  <!-- bottom panels -->
  <div class="a" style="left:67px;top:905px;width:254px;height:1px;background:#2b2b2b"></div>
  <div class="a" style="left:67px;top:938px;width:254px;height:1px;background:#2b2b2b"></div>
  <svg style="left:78px;top:913px" width="11" height="17"><path d="M1.5 1L8.5 8L1.5 15" class="ic" style="stroke-width:1.5"/></svg>
  <div class="t" style="left:97px;top:913px;font-size:17px;font-weight:bold;transform:scaleX(0.72);transform-origin:0 0">アウトライン</div>
  <svg style="left:78px;top:946px" width="11" height="17"><path d="M1.5 1L8.5 8L1.5 15" class="ic" style="stroke-width:1.5"/></svg>
  <div class="t" style="left:97px;top:946px;font-size:17px;font-weight:bold;transform:scaleX(0.72);transform-origin:0 0">タイムライン</div>

  <!-- status bar -->
  <div class="a" style="left:0;top:971px;width:953px;height:1px;background:#2b2b2b"></div>
  <div class="a" style="left:0;top:973px;width:46px;height:22px;background:#0078d4"></div>
  <svg style="left:0;top:965px" width="46" height="30"><path d="M26.5 13.2L20.9 19.5L26.5 24.5M14.3 19L20 24.4L14.5 30" stroke="#ffffff" stroke-width="1.5" fill="none"/></svg>
  <svg style="left:60px;top:979px" width="18" height="18" viewBox="0 0 18 18"><path d="M6 1.5H2.5Q1.5 1.5 1.5 2.5V17M6 1.5V17M6 1.5L10 3V17" fill="none" stroke="#cccccc" stroke-width="1.5"/><path d="M17 10H10.5M13 7L10 10L13 13" fill="none" stroke="#cccccc" stroke-width="1.5"/></svg>
  <div class="t" style="left:84.5px;top:978.5px;font-size:18px;color:#cccccc;letter-spacing:-0.2px">Sign in to Jira</div>
  <svg style="left:221px;top:980px" width="10" height="17"><path d="M1.5 1L8 7.5L1.5 14" fill="none" stroke="#cccccc" stroke-width="1.5"/></svg>
  <div class="t" style="left:242px;top:978.5px;font-size:18px;color:#cccccc;letter-spacing:-0.27px">No active issue</div>
  <svg style="left:386px;top:979px" width="18" height="18" viewBox="0 0 18 18"><path d="M6 1.5H2.5Q1.5 1.5 1.5 2.5V17M6 1.5V17M6 1.5L10 3V17" fill="none" stroke="#cccccc" stroke-width="1.5"/><path d="M17 10H10.5M13 7L10 10L13 13" fill="none" stroke="#cccccc" stroke-width="1.5"/></svg>
  <div class="t" style="left:410px;top:978.5px;font-size:18px;color:#cccccc">Sign in to Bitbucket</div>
  <svg style="left:589px;top:978px" width="21" height="21"><circle cx="10" cy="10" r="8.8" fill="none" stroke="#cccccc" stroke-width="1.5"/><path d="M6.5 6.5L13.5 13.5M13.5 6.5L6.5 13.5" stroke="#cccccc" stroke-width="1.5"/></svg>
  <div class="t" style="left:614.5px;top:978.5px;font-size:18px;color:#cccccc">0</div>
  <svg style="left:630px;top:978px" width="21" height="20"><path d="M10 1.5L19 18H1Z" fill="none" stroke="#cccccc" stroke-width="1.5" stroke-linejoin="round"/><path d="M10 7V12.5M10 14.5V16" stroke="#cccccc" stroke-width="1.6"/></svg>
  <div class="t" style="left:655px;top:978.5px;font-size:18px;color:#cccccc">0</div>
  <svg style="left:731px;top:978px" width="23" height="20" viewBox="0 0 26 22">
    <path d="M6 2.5C3.5 2.5 2.6 4.5 2.6 7.2V9.5C1.3 10.3 0.8 11.6 0.8 13.5C0.8 18 5.5 21 13 21C20.5 21 25.2 18 25.2 13.5C25.2 11.6 24.7 10.3 23.4 9.5V7.2C23.4 4.5 22.5 2.5 20 2.5C17.5 2.5 14.5 3 13 5C11.5 3 8.5 2.5 6 2.5Z" fill="#cccccc"/>
    <rect x="5.5" y="5.5" width="5.8" height="5.5" rx="1.8" fill="#181818"/><rect x="14.7" y="5.5" width="5.8" height="5.5" rx="1.8" fill="#181818"/>
    <path d="M6 13.5Q13 12 20 13.5V17Q13 19.5 6 17Z" fill="#181818"/>
    <rect x="9.5" y="14" width="2" height="3" rx="1" fill="#cccccc"/><rect x="14.5" y="14" width="2" height="3" rx="1" fill="#cccccc"/>
  </svg>
  <svg style="left:777px;top:978px" width="20" height="20"><circle cx="10" cy="10" r="8.5" fill="none" stroke="#cccccc" stroke-width="1.5"/><path d="M4 16L16 4" stroke="#cccccc" stroke-width="1.5"/></svg>
  <div class="t" style="left:803.5px;top:978.5px;font-size:18px;color:#cccccc;letter-spacing:-0.3px">Port : 5500</div>
  <svg style="left:914px;top:978px" width="18" height="20"><path d="M3 14V8.5Q3 2 9 2Q15 2 15 8.5V14L16.5 16H1.5Z" fill="none" stroke="#cccccc" stroke-width="1.5" stroke-linejoin="round"/></svg>
</div>

<!-- separator -->
<div class="a" style="left:953px;top:0;width:2px;height:995px;background:#7f7f7f"></div><div class="a" style="left:955px;top:0;width:2px;height:995px;background:#5a5a5a"></div>

<!-- ============ BROWSER ============ -->
<div class="a" id="browser" style="left:957px;top:0;width:949px;height:995px;background:#3b3b3b;overflow:hidden">
  <!-- tab strip -->
  <div class="a" style="left:0;top:0;width:949px;height:57px;background:#2e2e2e"></div>
  <div class="a" style="left:142px;top:7px;width:362px;height:52px;background:#3b3b3b;border-radius:10px 10px 0 0"></div>
  <div class="a" style="left:132px;top:47px;width:10px;height:10px;background:radial-gradient(circle at 0 0,#2e2e2e 9.5px,#3b3b3b 10.5px)"></div>
  <div class="a" style="left:504px;top:47px;width:10px;height:10px;background:radial-gradient(circle at 100% 0,#2e2e2e 9.5px,#3b3b3b 10.5px)"></div>
  <!-- workspaces icon -->
  <svg style="left:26px;top:19px" width="27" height="27" viewBox="0 0 27 27"><path d="M4 21Q1.5 20.5 1.5 18V8.5Q1.5 6.3 3.5 5.5L11.5 2.3Q13.3 1.7 13.6 3.2" fill="none" stroke="#d0d0d0" stroke-width="1.5" stroke-linecap="round"/><path d="M8.5 23.5Q6 23 6 20.5V11Q6 8.8 8 8L16 4.8Q17.8 4.2 18.1 5.7" fill="none" stroke="#d0d0d0" stroke-width="1.5" stroke-linecap="round"/><path d="M10.5 12.5Q10.5 10.5 12.5 9.8L22 6.5Q25 5.7 25 8.5V20Q25 22 23 22.7L13.5 25.5Q10.5 26.3 10.5 23.5Z" fill="none" stroke="#d0d0d0" stroke-width="1.5"/></svg>
  <svg style="left:91px;top:21px" width="23" height="23" viewBox="0 0 23 23"><rect x="1" y="1" width="21" height="21" rx="3" fill="none" stroke="#d0d0d0" stroke-width="1.5"/><path d="M1.5 3.5Q1.5 1.5 3.5 1.5H19.5Q21.5 1.5 21.5 3.5V6.5H1.5Z" fill="#d0d0d0"/><path d="M6.5 6.5V21.5" stroke="#d0d0d0" stroke-width="1.5"/></svg>
  <!-- globe -->
  <svg style="left:153px;top:20px" width="25" height="25" viewBox="0 0 25 25"><g fill="none" stroke="#d0d0d0" stroke-width="1.5"><circle cx="12.5" cy="12.5" r="11.5"/><ellipse cx="12.5" cy="12.5" rx="5" ry="11.5"/><path d="M1.5 8.5H23.5M1.5 16.5H23.5"/></g></svg>
  <div class="t" style="left:192.5px;top:23.5px;font-size:17px;letter-spacing:-0.22px;color:#e0e0e0">SjR-2015 RaDIaNCE</div>
  <svg style="left:472px;top:25px" width="15" height="15"><path d="M1.5 1.5L13.5 13.5M13.5 1.5L1.5 13.5" stroke="#d0d0d0" stroke-width="1.5"/></svg>
  <svg style="left:524px;top:21px" width="22" height="22"><path d="M11 1V21M1 11H21" stroke="#d0d0d0" stroke-width="1.6"/></svg>
  <!-- window controls -->
  <svg style="left:776px;top:25px" width="17" height="3"><path d="M0.5 1.2H16" stroke="#9a9a9a" stroke-width="1.3"/></svg>
  <svg style="left:845px;top:19px" width="16" height="16"><rect x="1" y="1" width="14" height="14" rx="2.5" fill="none" stroke="#9a9a9a" stroke-width="1.3"/></svg>
  <svg style="left:914px;top:19px" width="17" height="17"><path d="M1 1L16 16M16 1L1 16" stroke="#9a9a9a" stroke-width="1.3"/></svg>

  <!-- toolbar -->
  <svg style="left:29px;top:76px" width="26" height="23"><path d="M24.5 11.5H2M11.5 1.5L1.5 11.5L11.5 21.5" fill="none" stroke="#e0e0e0" stroke-width="1.6" stroke-linecap="round" stroke-linejoin="round"/></svg>
  <svg style="left:95px;top:75px" width="26" height="26" viewBox="0 0 26 26"><path d="M21.3 6A11 11 0 1 0 24 13" fill="none" stroke="#e0e0e0" stroke-width="1.6" stroke-linecap="round"/><path d="M22 1V7.5H15.5" fill="none" stroke="#e0e0e0" stroke-width="1.6" stroke-linecap="round" stroke-linejoin="round"/></svg>
  <svg style="left:162px;top:76px" width="24" height="23" viewBox="0 0 24 23"><path d="M2 21.5V10.5Q2 9.3 3 8.5L10.5 2Q12 0.8 13.5 2L21 8.5Q22 9.3 22 10.5V20Q22 21.5 20.5 21.5H16V15.5Q16 14 14.5 14H9.5Q8 14 8 15.5V21.5H3.5Q2 21.5 2 20Z" fill="none" stroke="#e0e0e0" stroke-width="1.6" stroke-linejoin="round"/></svg>
  <!-- address bar -->
  <div class="a" style="left:216px;top:64px;width:391px;height:47px;background:#282828;border:1.5px solid #5a5a5a;border-radius:24px"></div>
  <svg style="left:242px;top:75px" width="26" height="26" viewBox="0 0 26 26"><circle cx="13" cy="13" r="11.8" fill="none" stroke="#e0e0e0" stroke-width="1.6"/><circle cx="13" cy="8" r="1.3" fill="#e0e0e0"/><path d="M13 11.5V19" stroke="#e0e0e0" stroke-width="1.8"/></svg>
  <div class="t" style="left:290px;top:79px;font-size:20.4px;color:#ffffff">127.0.0.1<span style="color:#a8a8a8">:5500/index.html</span></div>
  <svg style="left:557px;top:75px" width="26" height="26" viewBox="0 0 26 26"><path d="M13 1.8L16.2 8.9L23.9 9.7L18.1 14.9L19.8 22.5L13 18.6L6.2 22.5L7.9 14.9L2.1 9.7L9.8 8.9Z" fill="none" stroke="#c8c8c8" stroke-width="1.5" stroke-linejoin="round"/></svg>
  <!-- extensions -->
  <svg style="left:638px;top:75px" width="26" height="27" viewBox="0 0 26 27"><path d="M4.5 4.5H10.8A2.8 2.8 0 0 1 16.4 4.5H22V10.1A2.8 2.8 0 0 0 22 15.7V21.7H15.7A2.8 2.8 0 0 1 10.1 21.7H4.5V15.7A2.8 2.8 0 0 1 4.5 10.1Z" fill="none" stroke="#ffffff" stroke-width="1.7" stroke-linejoin="round"/></svg>
  <div class="a" style="left:686px;top:75px;width:1.5px;height:23.5px;background:#6a6a6a"></div>
  <svg style="left:709px;top:75px" width="28" height="27" viewBox="0 0 28 27"><path d="M26.5 8.9H17.8L13.9 1.6L9.9 8.5L2.1 10.3L8.8 15.9L6.9 24.3L14.6 20.3" fill="none" stroke="#ffffff" stroke-width="1.7" stroke-linejoin="round" stroke-linecap="round"/><path d="M17.5 13.6H26.5M17.5 18.1H26.5" stroke="#ffffff" stroke-width="1.7" stroke-linecap="round"/></svg>
  <!-- avatar -->
  <div class="a" style="left:774px;top:70px;width:36px;height:36px;border-radius:50%;overflow:hidden;background:#8a6a3a">
    <div class="a" style="left:14px;top:-4px;width:30px;height:30px;background:#3e464c;border-radius:50%"></div>
    <div class="a" style="left:0px;top:2px;width:16px;height:18px;background:#a88c58"></div>
    <div class="a" style="left:22px;top:22px;width:14px;height:14px;background:#b08040"></div>
    <div class="a" style="left:12px;top:2px;width:10px;height:11px;background:#3a3a3a;border-radius:50%"></div>
    <div class="a" style="left:13px;top:9px;width:7px;height:8px;background:#c8b090;border-radius:40%"></div>
    <div class="a" style="left:9px;top:16px;width:16px;height:20px;background:#1c2a44;border-radius:40% 40% 10% 10%"></div>
  </div>
  <svg style="left:851px;top:85px" width="22" height="6"><circle cx="2.8" cy="3" r="2.2" fill="#e0e0e0"/><circle cx="11" cy="3" r="2.2" fill="#e0e0e0"/><circle cx="19.2" cy="3" r="2.2" fill="#e0e0e0"/></svg>
  <!-- copilot -->
  <svg style="left:907px;top:72.5px" width="34" height="31" viewBox="0 0 34 31">
    <defs>
      <linearGradient id="cpa" x1="0" y1="0" x2="0" y2="1"><stop offset="0" stop-color="#1e9bf5"/><stop offset="0.5" stop-color="#3cc36f"/><stop offset="0.9" stop-color="#f2d000"/></linearGradient>
      <linearGradient id="cpb" x1="0" y1="0" x2="0" y2="1"><stop offset="0.05" stop-color="#b15ef0"/><stop offset="0.5" stop-color="#f0508c"/><stop offset="1" stop-color="#ff9a40"/></linearGradient>
    </defs>
    <path d="M27 30.5H15Q11 30.5 12 26.5L15 18.5H20L23 11.5Q24 8.5 28 8.5H30Q33.5 8.5 33.5 12.5V24.5Q33.5 30.5 27 30.5Z" fill="url(#cpb)"/>
    <path d="M6 0.5H18Q22 0.5 21 4.5L18 13.5H13L10 20.5Q9 23.5 5 23.5H3Q0 23.5 0 19.5V6.5Q0 0.5 6 0.5Z" fill="url(#cpa)"/>
    <path d="M20 0.5Q23 0.5 24.5 3L27 8.5H24Q22 8.5 21 10Z" fill="#1a5fd0" opacity="0.8"/>
    <path d="M14 30.5Q11 30.5 9.5 28L7 23.5H10Q12 23.5 13 22Z" fill="#e8502a" opacity="0.8"/>
  </svg>

  <!-- bookmarks -->
  <svg style="left:17px;top:131px" width="26" height="22" viewBox="0 0 26 22"><path d="M1.5 4Q1.5 1.5 4 1.5H9.5L12 4.5H22Q24.5 4.5 24.5 7V18.5Q24.5 21 22 21H4Q1.5 21 1.5 18.5Z M1.5 7.5H24.5" fill="none" stroke="#e0e0e0" stroke-width="1.5" stroke-linejoin="round"/></svg>
  <div class="t" style="left:51.5px;top:133px;font-size:17.5px;color:#e6e6e6">Internet Explorer か...</div>
  <div class="t" style="left:253.5px;top:121.5px;font-size:29px;font-weight:bold;color:#000000">a</div>
  <svg style="left:248px;top:144px" width="26" height="9" viewBox="0 0 26 9"><path d="M1.5 2.2Q12 8.5 22.5 3" fill="none" stroke="#f29a1f" stroke-width="2" stroke-linecap="round"/><path d="M19.5 1.8L23.3 2.3L22.8 5.8" fill="none" stroke="#f29a1f" stroke-width="1.6" stroke-linecap="round"/></svg>
  <div class="t" style="left:282px;top:133px;font-size:18px;color:#e6e6e6">Amazon</div>
  <svg style="left:371px;top:129px" width="25" height="25" viewBox="0 0 25 25"><g fill="none" stroke="#d0d0d0" stroke-width="1.5"><circle cx="12.5" cy="12.5" r="11.5"/><ellipse cx="12.5" cy="12.5" rx="5" ry="11.5"/><path d="M1.5 8.5H23.5M1.5 16.5H23.5"/></g></svg>
  <div class="t" style="left:405px;top:133px;font-size:18px;color:#e6e6e6;transform:scaleX(0.965);transform-origin:0 0">ICT支援員養成講座...</div>
  <svg style="left:602px;top:129px" width="25" height="25" viewBox="0 0 48 48"><path d="M43.6 20H24v8.5h11.3C34.2 33.4 29.7 36.5 24 36.5c-6.9 0-12.5-5.6-12.5-12.5S17.1 11.5 24 11.5c3.1 0 6 1.2 8.1 3.1l6-6C34.6 5.3 29.6 3 24 3 12.4 3 3 12.4 3 24s9.4 21 21 21c10.5 0 20-7.6 20-21 0-1.3-.2-2.7-.4-4z" fill="#4285f4"/><path d="M5.4 14.1l7 5.1C14.3 14.9 18.8 11.5 24 11.5c3.1 0 6 1.2 8.1 3.1l6-6C34.6 5.3 29.6 3 24 3 16 3 9 7.6 5.4 14.1z" fill="#ea4335"/><path d="M24 45c5.5 0 10.4-2 14-5.4l-6.6-5.5c-2 1.5-4.6 2.4-7.4 2.4-5.6 0-10.3-3.1-11.3-8.5l-7 5.4C9.1 40.2 16 45 24 45z" fill="#34a853"/><path d="M5.7 33.4l7-5.4c-.3-1.3-.5-2.6-.5-4s.2-2.7.5-4l-7-5.1C4 17.5 3 20.6 3 24s1 6.5 2.7 9.4z" fill="#fbbc05"/><path d="M43.6 20H24v8.5h11.3c-.5 2.3-1.9 4.4-3.9 5.6l6.6 5.5C42 36 44 30.5 44 24c0-1.3-.2-2.7-.4-4z" fill="#4285f4"/></svg>
  <div class="t" style="left:636px;top:133px;font-size:18px;color:#e6e6e6;transform:scaleX(0.85);transform-origin:0 0">ホーム : Google スキル...</div>
  <svg style="left:898px;top:132px" width="11" height="19"><path d="M1.5 1L9.5 9.3L1.5 17.5" fill="none" stroke="#e0e0e0" stroke-width="1.6"/></svg>

  <!-- content -->
  <div class="a" style="left:0;top:166px;width:6px;height:829px;background:linear-gradient(#3b3b3b 0,#333333 150px,#2e2e2e 480px,#2d2d2d 829px)"></div>
  <div class="a" style="left:6px;top:169px;width:922px;height:826px;background:#ffffff;border-top-left-radius:8px;overflow:hidden">
    <div class="a" style="left:0;top:0;width:922px;height:529px;background:#091c31"></div>
    <div class="t" style="left:0;top:93.7px;width:922px;text-align:center;font-size:96px;font-weight:bold;color:#f0c341;line-height:110px;transform:scaleY(1.04);transform-origin:50% 88.3px">SjR-2015</div><div class="t" style="left:0;top:203.7px;width:922px;text-align:center;font-size:96px;font-weight:bold;color:#f0c341;line-height:110px;transform:scaleY(1.04);transform-origin:50% 88.3px">RaDIaNCE</div>
    <div class="t" style="left:0;top:387.5px;width:922px;text-align:center;font-size:47.8px;color:#f0c341;-webkit-text-stroke:0.4px #f0c341">「自分で創る理想のライフスタイル」</div>
    <div class="a" style="left:0;top:529px;width:922px;height:135px;background:#f4f4f4"></div>
    <div class="t" style="left:23px;top:560px;font-size:24px;font-weight:bold;color:#333333;line-height:28.4px;transform:scaleY(1.05);transform-origin:0 21px">ABOUT<br>ME</div>
    <div class="t" style="left:190px;top:558.5px;font-size:23.5px;font-weight:bold;color:#333333;line-height:37px;transform:scaleX(0.97);transform-origin:0 0">お手伝いサービ<br>ス</div>
    <div class="t" style="left:418px;top:561.5px;font-size:24px;font-weight:bold;color:#333333;transform:scaleY(1.05);transform-origin:0 21px">LABO</div>
    <div class="t" style="left:531px;top:561.5px;font-size:24px;font-weight:bold;color:#333333;transform:scaleY(1.05);transform-origin:0 21px">SNS</div>
    <div class="t" style="left:625.5px;top:558.5px;font-size:23.6px;font-weight:bold;color:#333333;line-height:36px;transform:scaleX(0.984);transform-origin:0 0">特定商取引法に基づく表<br>記</div>
    <div class="t" style="left:192px;top:775px;font-size:35.3px;letter-spacing:0.3px;font-weight:bold;color:#111111;-webkit-text-stroke:0.9px #111111;transform:scaleY(0.83);transform-origin:0 60%">あなたの理想を形にするお手伝い</div>
    <!-- left shadow -->
    <div class="a" style="left:0;top:0;width:70px;height:826px;background:linear-gradient(90deg,rgba(0,0,0,0.17) 0,rgba(0,0,0,0.09) 10px,rgba(0,0,0,0.035) 28px,rgba(0,0,0,0) 62px)"></div>
  </div>
  <!-- scrollbar -->
  <div class="a" style="left:928px;top:169px;width:21px;height:826px;background:#2e2e2e;border-top-right-radius:8px"></div>
  <svg style="left:932px;top:175px" width="15" height="12"><path d="M7.5 1.5L13.5 10.5H1.5Z" fill="#a0a0a0" stroke="#a0a0a0" stroke-width="1.5" stroke-linejoin="round"/></svg>
  <div class="a" style="left:933px;top:196px;width:13px;height:420px;background:#a0a0a0;border-radius:6.5px"></div>
  <svg style="left:932px;top:980px" width="15" height="12"><path d="M7.5 10.5L13.5 1.5H1.5Z" fill="#a0a0a0" stroke="#a0a0a0" stroke-width="1.5" stroke-linejoin="round"/></svg>
</div>

</body></html>
